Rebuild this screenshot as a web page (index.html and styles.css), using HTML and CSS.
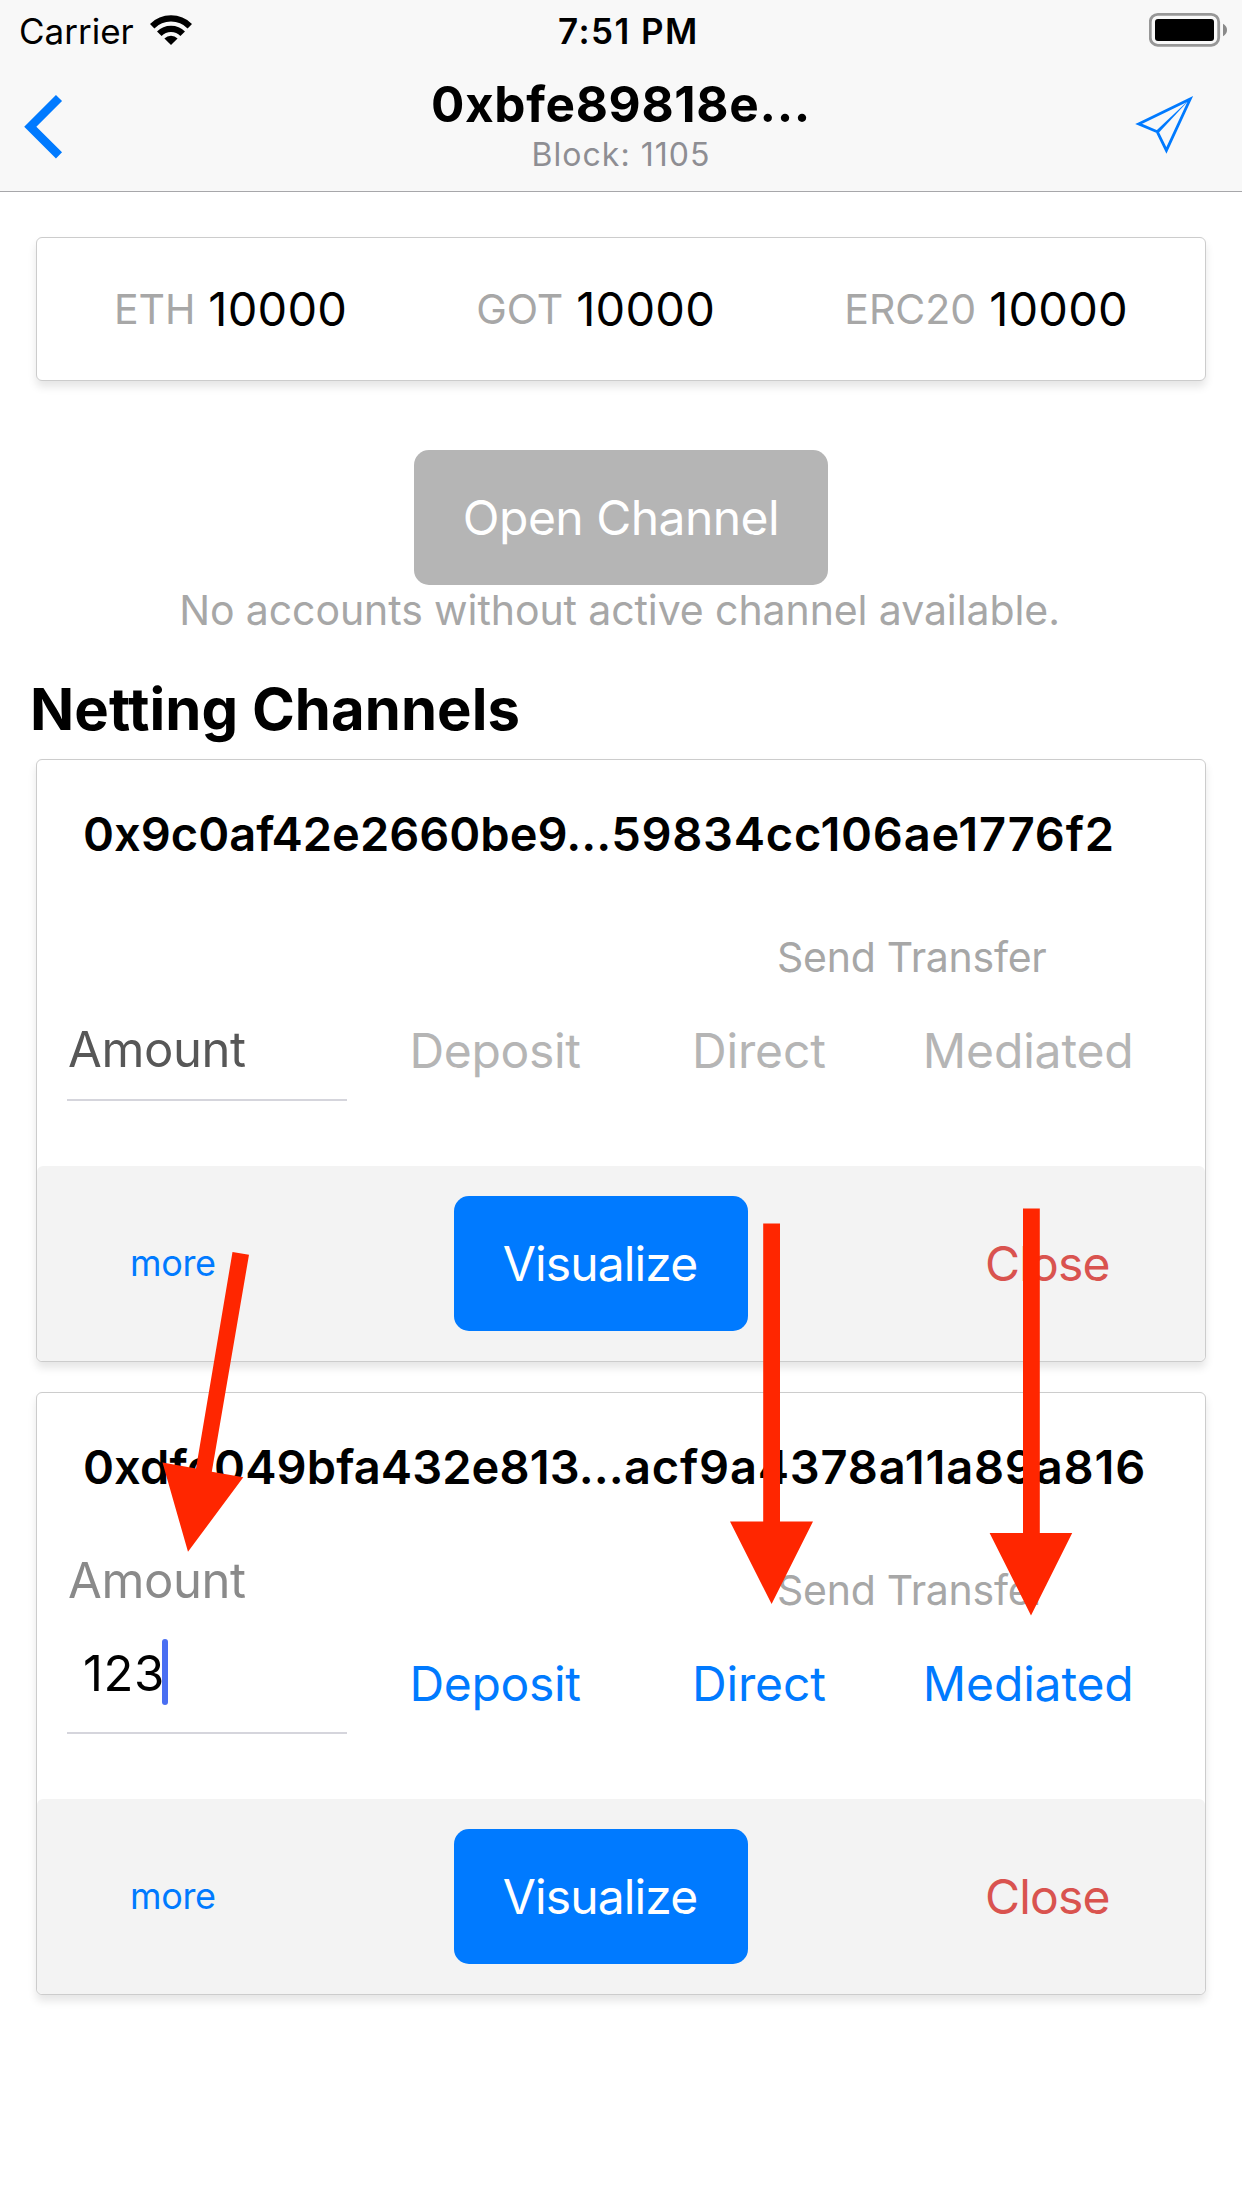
FILE: index.html
```html
<!DOCTYPE html>
<html lang="en">
<head>
<meta charset="utf-8">
<title>Netting Channels</title>
<link rel="stylesheet" href="styles.css">
</head>
<body>
<div class="screen">
  <header class="header">
    <div class="status">
      <div class="status-left">
        <span class="carrier">Carrier</span>
        <svg class="wifi" width="44" height="32" viewBox="149 14 44 32">
          <g fill="none" stroke="#000">
            <path stroke-width="6.2" d="M152.2 26.2A26.7 26.7 0 0 1 189.8 26.2"/>
            <path stroke-width="6.4" d="M159.3 33.8A16.4 16.4 0 0 1 182.7 33.8"/>
          </g>
          <path d="M171 45L164.4 38.6A9.3 9.3 0 0 1 177.6 38.6Z"/>
        </svg>
      </div>
      <span class="time">7:51 PM</span>
      <svg class="battery" width="79" height="34" viewBox="1149 13 79 34">
        <rect x="1150.3" y="14.4" width="68.4" height="30.9" rx="7.5" fill="none" stroke="#979797" stroke-width="2.8"/>
        <rect x="1155" y="19" width="59" height="22" rx="3"/>
        <path fill="#8a8a8a" d="M1223 23.8Q1227 26 1227 30T1223 36.2Z"/>
      </svg>
    </div>
    <div class="nav">
      <svg class="back" width="40" height="66" viewBox="23 94 40 66">
        <path fill="none" stroke="#007aff" stroke-width="8.6" d="M59 98L30.3 126.7L59 155.4"/>
      </svg>
      <div class="heading">
        <h1 class="title">0xbfe89818e...</h1>
        <p class="subtitle">Block: 1105</p>
      </div>
      <svg class="send" width="60" height="60" viewBox="1134 95 60 60">
        <path fill="none" stroke="#007aff" stroke-width="2.8" d="M1138.6 123.9L1190.2 99L1166.4 150.4L1157.3 131.8Z"/>
        <path fill="#007aff" d="M1190.5 98.5L1158.8 132.8L1156.4 130.6Z"/>
      </svg>
    </div>
  </header>

  <main class="content">
    <section class="card balances">
      <div class="balance"><span class="unit eth">ETH</span><span class="value">10000</span></div>
      <div class="balance"><span class="unit got">GOT</span><span class="value">10000</span></div>
      <div class="balance"><span class="unit">ERC20</span><span class="value">10000</span></div>
    </section>

    <button class="button open" disabled>Open Channel</button>
    <p class="hint">No accounts without active channel available.</p>

    <h2 class="section-title">Netting Channels</h2>

    <article class="card channel">
      <div class="channel-body">
        <h3 class="address first">0x9c0af42e2660be9...<span class="tail">59834cc106ae1776f2</span></h3>
        <div class="form">
          <div class="field"><label class="label">Amount</label></div>
          <span class="action deposit">Deposit</span>
          <div class="transfer">
            <p class="transfer-title">Send Transfer</p>
            <div class="transfer-actions"><span class="action direct">Direct</span><span class="action mediated">Mediated</span></div>
          </div>
        </div>
      </div>
      <footer class="channel-footer">
        <span class="more">more</span>
        <button class="button visualize">Visualize</button>
        <span class="close">Close</span>
      </footer>
    </article>

    <article class="card channel active">
      <div class="channel-body">
        <h3 class="address second">0xdfc049bfa432e813...<span class="tail">acf9a4378a11a89a816</span></h3>
        <div class="form">
          <div class="field">
            <label class="label">Amount</label>
            <div class="input"><span>123</span><i class="caret"></i></div>
          </div>
          <span class="action deposit">Deposit</span>
          <div class="transfer">
            <p class="transfer-title">Send Transfer</p>
            <div class="transfer-actions"><span class="action direct">Direct</span><span class="action mediated">Mediated</span></div>
          </div>
        </div>
      </div>
      <footer class="channel-footer">
        <span class="more">more</span>
        <button class="button visualize">Visualize</button>
        <span class="close">Close</span>
      </footer>
    </article>
  </main>

  <svg class="arrows" width="1242" height="2208" viewBox="0 0 1242 2208" fill="#ff2600">
    <path d="M232.5 1252L249 1254.7L211.8 1471.8L243.3 1477.2L188 1551.8L162.5 1462.6L196 1468.6Z"/>
    <path d="M763.2 1223.5H780V1521.5H813L771.6 1604L730 1521.5H763.2Z"/>
    <path d="M1023 1208.5H1039.8V1533H1072.2L1031 1615.5L989.6 1533H1023Z"/>
  </svg>
</div>
</body>
</html>
```
FILE: styles.css
```css
* { box-sizing: border-box; margin: 0; padding: 0; }

body {
  background: #fff;
  color: #000;
  font-family: Inter, "Liberation Sans", sans-serif;
  font-weight: 400;
}

.screen { position: relative; width: 1242px; height: 2208px; overflow: hidden; }

svg { display: block; }

/* Header */
.header { height: 192px; background: #f8f8f8; border-bottom: 1px solid #a7a7aa; }

.status {
  display: grid;
  grid-template-columns: 540px 1fr auto;
  height: 62px;
  padding: 0 14px 0 18px;
  font-size: 35px;
  line-height: 62px;
}
.status-left { display: flex; gap: 15px; }
.carrier { padding-left: 1px; letter-spacing: 0; }
.wifi { margin-top: 14px; }
.time { font-weight: 600; letter-spacing: 1.45px; }
.battery { margin-top: 13px; }

.nav {
  display: grid;
  grid-template-columns: 200px 1fr 200px;
  height: 129px;
  padding: 0 48px 0 23px;
}
.back { margin-top: 32px; }
.heading { padding: 12px 0 0 25px; text-align: center; }
.title { font-size: 49.5px; line-height: 60px; font-weight: 700; letter-spacing: 0.68px; }
.subtitle { font-size: 32px; line-height: 42px; letter-spacing: 1.03px; color: #8e8e93; }
.send { margin-top: 33px; justify-self: end; }

/* Content */
.content { display: flex; flex-direction: column; padding: 45px 36px 0; }

.card {
  background: #fff;
  border: 1px solid #ccc;
  border-radius: 6px;
  box-shadow: 0 6px 9px rgba(0, 0, 0, 0.1);
}

.balances {
  display: flex;
  justify-content: space-between;
  align-items: center;
  height: 144px;
  padding: 0 77px;
}
.balance { display: flex; align-items: center; gap: 13px; }
.unit { font-size: 41px; line-height: 50px; color: #a7a7a7; }
.eth { letter-spacing: -0.1px; }
.got { letter-spacing: -0.1px; }
.value { font-size: 47px; line-height: 58px; letter-spacing: 0.23px; }

.button {
  height: 135px;
  border: 0;
  border-radius: 15px;
  background: #007aff;
  color: #fff;
  font: 400 48px/60px Inter, "Liberation Sans", sans-serif;
  text-align: center;
}
.open { width: 414px; align-self: center; margin-top: 69px; background: #b5b5b5; letter-spacing: -0.53px; }

.hint {
  padding-right: 3px;
  font-size: 41px;
  line-height: 50px;
  letter-spacing: -0.093px;
  color: #a7a7a7;
  text-align: center;
}

.section-title {
  margin: 39px 0 15px -6px;
  font-size: 58px;
  line-height: 70px;
  font-weight: 700;
  letter-spacing: 0.06px;
}

/* Channel card */
.channel { height: 603px; overflow: hidden; margin-bottom: 30px; }
.channel-body { height: 406px; padding-top: 44px; }

.address { padding-left: 46px; font-size: 47px; line-height: 60px; font-weight: 600; white-space: nowrap; }
.first { letter-spacing: 0; }
.first .tail { letter-spacing: 0.75px; }
.second { letter-spacing: 0.1px; }
.second .tail { letter-spacing: 0.83px; }

.form { display: grid; grid-template-columns: 280px 294px 1fr; height: 237px; padding-left: 30px; }

.field {
  display: flex;
  flex-direction: column;
  justify-content: flex-end;
  padding-bottom: 19px;
  border-bottom: 2px solid #d5d5dc;
}
.label { padding-left: 1px; font-size: 49px; line-height: 60px; letter-spacing: -0.4px; color: #575757; }

.action { font-size: 48px; line-height: 60px; color: #b5b5b5; }
.deposit { align-self: end; margin-bottom: 20px; padding-left: 2px; text-align: center; letter-spacing: -0.33px; }

.transfer { padding: 68px 0 0 51px; }
.transfer-title { padding-left: 85px; font-size: 41px; line-height: 50px; letter-spacing: -0.26px; color: #a7a7a7; }
.transfer-actions { display: flex; gap: 97px; margin-top: 39px; }
.direct, .mediated { letter-spacing: -0.14px; }

.active .action { color: #007aff; }
.active .field { padding-bottom: 27px; }
.active .label { margin-bottom: 28px; color: #8a8a8a; }
.input {
  display: flex;
  height: 66px;
  padding-left: 16px;
  font-size: 49px;
  line-height: 70px;
  letter-spacing: 0.6px;
}
.caret { width: 6px; height: 66px; margin-left: -3px; border-radius: 3px; background: #4a6ff2; }

.channel-footer {
  display: grid;
  grid-template-columns: 417px 294px 1fr;
  align-items: center;
  height: 195px;
  border-radius: 6px;
  background: #f3f3f3;
}
.more { padding: 0 0 1px 93px; font-size: 36px; letter-spacing: -0.36px; color: #007aff; }
.visualize { padding-right: 2px; letter-spacing: -0.86px; }
.close { padding-left: 237px; font-size: 48px; line-height: 60px; letter-spacing: -0.85px; color: #d9534f; }

/* Annotation arrows drawn over the screen */
.arrows { position: absolute; top: 0; left: 0; pointer-events: none; }
```
